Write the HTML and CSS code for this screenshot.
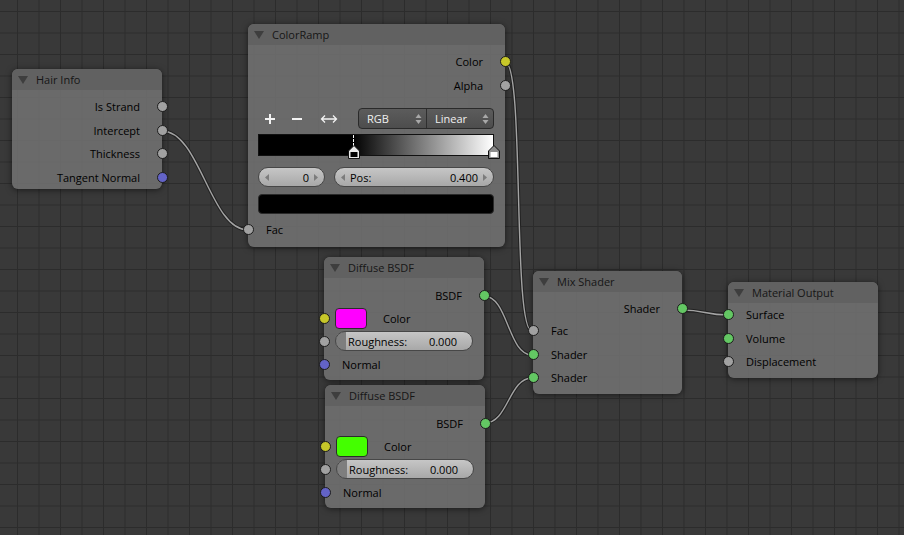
FILE: index.html
```html
<!DOCTYPE html>
<html lang="en">
<head>
    <meta charset="UTF-8">
    <title>Node Editor</title>
    <link rel="stylesheet" href="styles.css">
</head>
<body>
    <div class="canvas">
        <!-- links between sockets -->
        <svg class="links" width="904" height="535" viewBox="0 0 904 535">
            <g class="link-outline">
                <path d="M162 131 C200 131, 210 230, 248 230"/>
                <path d="M505 62 C525 62, 512 331, 532 331"/>
                <path d="M484 296 C508 296, 508 355, 532 355"/>
                <path d="M485 423 C508 423, 509 378, 532 378"/>
                <path d="M682 310 C705 310, 705 315, 728 315"/>
            </g>
            <g class="link-core">
                <path d="M162 131 C200 131, 210 230, 248 230"/>
                <path d="M505 62 C525 62, 512 331, 532 331"/>
                <path d="M484 296 C508 296, 508 355, 532 355"/>
                <path d="M485 423 C508 423, 509 378, 532 378"/>
                <path d="M682 310 C705 310, 705 315, 728 315"/>
            </g>
        </svg>

        <!-- Hair Info -->
        <div class="node node-hair">
            <div class="node-header"><span class="collapse"></span>Hair Info</div>
            <div class="node-body">
                <div class="row out">Is Strand<i class="socket value"></i></div>
                <div class="row out">Intercept<i class="socket value"></i></div>
                <div class="row out">Thickness<i class="socket value"></i></div>
                <div class="row out">Tangent Normal<i class="socket vector"></i></div>
            </div>
        </div>

        <!-- ColorRamp -->
        <div class="node node-ramp">
            <div class="node-header"><span class="collapse"></span>ColorRamp</div>
            <div class="node-body">
                <div class="row out">Color<i class="socket color"></i></div>
                <div class="row out">Alpha<i class="socket value"></i></div>

                <div class="ramp-panel">
                    <div class="ramp-tools">
                        <svg class="tool tool-add" width="12" height="12" viewBox="0 0 12 12"><path d="M6 1V11M1 6H11"/></svg>
                        <svg class="tool tool-remove" width="12" height="12" viewBox="0 0 12 12"><path d="M1 6H11"/></svg>
                        <svg class="tool tool-flip" width="18" height="12" viewBox="0 0 18 12"><path d="M1.5 6H16.5M5 2.5L1.5 6L5 9.5M13 2.5L16.5 6L13 9.5"/></svg>
                        <div class="dropdowns">
                            <div class="dropdown dd-mode">RGB<svg class="updown" width="7" height="12" viewBox="0 0 7 12"><path d="M0.5 5L3.5 1L6.5 5Z M0.5 7L3.5 11L6.5 7Z"/></svg></div>
                            <div class="dropdown dd-interp">Linear<svg class="updown" width="7" height="12" viewBox="0 0 7 12"><path d="M0.5 5L3.5 1L6.5 5Z M0.5 7L3.5 11L6.5 7Z"/></svg></div>
                        </div>
                    </div>

                    <div class="ramp-bar">
                        <span class="marker-line"></span>
                        <svg class="marker marker-active" width="12" height="14" viewBox="0 0 12 14">
                            <path class="m-outer" d="M0.5 6L6 0.5L11.5 6V13.5H0.5Z"/>
                            <rect class="m-inner" x="2.5" y="7" width="7" height="5"/>
                        </svg>
                        <svg class="marker marker-end" width="12" height="14" viewBox="0 0 12 14">
                            <path class="m-outer" d="M0.5 6L6 0.5L11.5 6V13.5H0.5Z"/>
                            <rect class="m-inner" x="2.5" y="7" width="7" height="5"/>
                        </svg>
                    </div>

                    <div class="ramp-fields">
                        <div class="num-field field-index">
                            <svg class="arrow" width="4" height="7" viewBox="0 0 4 7"><path d="M4 0V7L0 3.5Z"/></svg>
                            <span class="num-value">0</span>
                            <svg class="arrow" width="4" height="7" viewBox="0 0 4 7"><path d="M0 0V7L4 3.5Z"/></svg>
                        </div>
                        <div class="num-field field-pos">
                            <svg class="arrow" width="4" height="7" viewBox="0 0 4 7"><path d="M4 0V7L0 3.5Z"/></svg>
                            <span class="num-label">Pos:</span>
                            <span class="num-value">0.400</span>
                            <svg class="arrow" width="4" height="7" viewBox="0 0 4 7"><path d="M0 0V7L4 3.5Z"/></svg>
                        </div>
                    </div>

                    <div class="ramp-swatch"></div>
                </div>

                <div class="row in row-fac">Fac<i class="socket value"></i></div>
            </div>
        </div>

        <!-- Diffuse BSDF (magenta) -->
        <div class="node node-diffuse diffuse-a">
            <div class="node-header"><span class="collapse"></span>Diffuse BSDF</div>
            <div class="node-body">
                <div class="row out">BSDF<i class="socket shader"></i></div>
                <div class="row in widget"><span class="swatch swatch-magenta"></span><span class="swatch-label">Color</span><i class="socket color"></i></div>
                <div class="row in widget"><div class="slider"><span>Roughness:</span><span>0.000</span></div><i class="socket value"></i></div>
                <div class="row in">Normal<i class="socket vector"></i></div>
            </div>
        </div>

        <!-- Diffuse BSDF (green) -->
        <div class="node node-diffuse diffuse-b">
            <div class="node-header"><span class="collapse"></span>Diffuse BSDF</div>
            <div class="node-body">
                <div class="row out">BSDF<i class="socket shader"></i></div>
                <div class="row in widget"><span class="swatch swatch-green"></span><span class="swatch-label">Color</span><i class="socket color"></i></div>
                <div class="row in widget"><div class="slider"><span>Roughness:</span><span>0.000</span></div><i class="socket value"></i></div>
                <div class="row in">Normal<i class="socket vector"></i></div>
            </div>
        </div>

        <!-- Mix Shader -->
        <div class="node node-mix">
            <div class="node-header"><span class="collapse"></span>Mix Shader</div>
            <div class="node-body">
                <div class="row out short">Shader<i class="socket shader"></i></div>
                <div class="row in">Fac<i class="socket value"></i></div>
                <div class="row in">Shader<i class="socket shader"></i></div>
                <div class="row in">Shader<i class="socket shader"></i></div>
            </div>
        </div>

        <!-- Material Output -->
        <div class="node node-output">
            <div class="node-header"><span class="collapse"></span>Material Output</div>
            <div class="node-body">
                <div class="row in">Surface<i class="socket shader"></i></div>
                <div class="row in">Volume<i class="socket shader"></i></div>
                <div class="row in">Displacement<i class="socket value"></i></div>
            </div>
        </div>
    </div>
</body>
</html>
```

FILE: styles.css
```css
* {
    margin: 0;
    padding: 0;
    box-sizing: border-box;
}

body {
    background: #393939;
    font-family: "Open Sans", "DejaVu Sans", sans-serif;
    font-size: 11px;
    color: #000;
}

.canvas {
    position: relative;
    width: 904px;
    height: 535px;
    overflow: hidden;
    background-color: #393939;
    background-image:
        linear-gradient(to right, #2c2c2c 1px, transparent 1px),
        linear-gradient(to bottom, #2c2c2c 1px, transparent 1px);
    background-size: 21.5px 21.5px;
    background-position: 17px 11px;
}

/* links */
.links {
    position: absolute;
    left: 0;
    top: 0;
}

.links path {
    fill: none;
}

.link-outline path {
    stroke: #222;
    stroke-width: 3.5;
}

.link-core path {
    stroke: #a3a3a3;
    stroke-width: 1.4;
}

/* nodes */
.node {
    position: absolute;
    background: rgba(114, 114, 114, 0.86);
    border-radius: 6px;
    box-shadow: 0 1px 6px rgba(0, 0, 0, 0.55);
}

.node-header {
    height: 21px;
    display: flex;
    align-items: center;
    padding-left: 6px;
    background: rgba(96, 96, 96, 0.9);
    border-radius: 6px 6px 0 0;
    color: #161616;
}

.collapse {
    width: 0;
    height: 0;
    border-left: 5.5px solid transparent;
    border-right: 5.5px solid transparent;
    border-top: 8px solid #3e3e3e;
    margin-right: 8px;
}

.node-body {
    padding: 5px 0 4px;
}

.row {
    position: relative;
    height: 23.5px;
    display: flex;
    align-items: center;
    white-space: nowrap;
}

.row.out {
    justify-content: flex-end;
    padding-right: 22px;
}

.row.in {
    padding-left: 18px;
}

.row.in.widget {
    padding-left: 11px;
}

.row.short {
    height: 21px;
}

.socket {
    position: absolute;
    top: 50%;
    width: 11px;
    height: 11px;
    margin-top: -5.5px;
    border-radius: 50%;
    border: 1px solid #1c1c1c;
}

.row.out .socket {
    right: -5.5px;
}

.row.in .socket {
    left: -5.5px;
}

.socket.value { background: #a1a1a1; }
.socket.color { background: #c7c729; }
.socket.vector { background: #6363c7; }
.socket.shader { background: #63c763; }

/* node placement on the canvas */
.node-hair {
    left: 12px;
    top: 69px;
    width: 150px;
}

.node-hair .node-body {
    padding-bottom: 0;
}

.node-ramp {
    left: 248px;
    top: 24px;
    width: 257px;
}

.node-ramp .node-body {
    padding-bottom: 5.5px;
}

.node-diffuse {
    width: 160px;
}

.node-diffuse .node-body {
    padding: 5.5px 0 4px;
}

.node-diffuse .row {
    height: 23px;
}

.diffuse-a {
    left: 324px;
    top: 257px;
}

.diffuse-b {
    left: 325px;
    top: 385px;
}

.node-mix {
    left: 533px;
    top: 271px;
    width: 149px;
}

.node-mix .node-body {
    padding: 6px 0 4.5px;
}

.node-output {
    left: 728px;
    top: 282px;
    width: 150px;
}

.node-output .node-body {
    padding: 0 0 4.5px;
}

/* color ramp widgets */
.ramp-panel {
    padding: 0 11px 0 10px;
}

.ramp-tools {
    display: flex;
    align-items: center;
    height: 21px;
    margin-top: 11px;
}

.tool {
    fill: none;
    stroke: #f2f2f2;
}

.tool-add {
    margin-left: 6px;
    stroke-width: 2;
}

.tool-remove {
    margin-left: 15px;
    stroke-width: 2;
}

.tool-flip {
    margin-left: 17px;
    stroke-width: 1.3;
}

.dropdowns {
    display: flex;
    margin-left: auto;
    height: 21px;
    border: 1px solid #2a2a2a;
    border-radius: 4px;
    background: linear-gradient(#5c5c5c, #4d4d4d);
    overflow: hidden;
}

.dropdown {
    display: flex;
    align-items: center;
    justify-content: space-between;
    padding: 0 4px 0 8px;
    color: #f0f0f0;
}

.dd-mode {
    width: 68px;
    border-right: 1px solid #2f2f2f;
}

.dd-interp {
    width: 66px;
}

.updown {
    fill: #a8a8a8;
}

.ramp-bar {
    position: relative;
    height: 22px;
    margin-top: 5px;
    border: 1px solid #111;
    background: linear-gradient(to right, #000 0, #000 40%, #fff 100%);
}

.marker-line {
    position: absolute;
    left: 94px;
    top: 0;
    height: 11px;
    border-left: 1px dashed #fff;
}

.marker {
    position: absolute;
    top: 10px;
}

.marker .m-outer {
    stroke: #111;
    stroke-width: 1;
}

.marker-active {
    left: 89px;
}

.marker-active .m-outer { fill: #e8e8e8; }
.marker-active .m-inner { fill: #000; }

.marker-end {
    left: 229px;
}

.marker-end .m-outer { fill: #8c8c8c; }
.marker-end .m-inner { fill: #fff; }

.ramp-fields {
    display: flex;
    gap: 9px;
    height: 20px;
    margin-top: 11px;
}

.num-field {
    display: flex;
    align-items: center;
    gap: 5px;
    padding: 0 6px;
    border: 1px solid #474747;
    border-radius: 10px;
    background: linear-gradient(#c6c6c6, #a8a8a8);
}

.num-field .arrow {
    fill: #7c7c7c;
    flex: none;
}

.field-index {
    width: 67px;
}

.field-index .num-value {
    margin-left: auto;
}

.field-pos {
    flex: 1;
}

.field-pos .num-value {
    margin-left: auto;
}

.ramp-swatch {
    height: 20px;
    margin-top: 7px;
    border: 1px solid #2a2a2a;
    border-radius: 4px;
    background: #000;
}

.row-fac {
    margin-top: 4px;
}

/* diffuse widgets */
.swatch {
    width: 32px;
    height: 21px;
    border: 1px solid #2c2c2c;
    border-radius: 4px;
}

.swatch-magenta { background: #ff00ff; }
.swatch-green { background: #44ff00; }

.swatch-label {
    margin-left: 16px;
}

.slider {
    width: 138px;
    height: 20px;
    display: flex;
    align-items: center;
    justify-content: space-between;
    padding: 0 15px 0 12px;
    border: 1px solid #474747;
    border-radius: 10px;
    background:
        linear-gradient(to right, #7e7e7e 0, #7e7e7e 10px, transparent 10px),
        linear-gradient(#c6c6c6, #a8a8a8);
}
```
